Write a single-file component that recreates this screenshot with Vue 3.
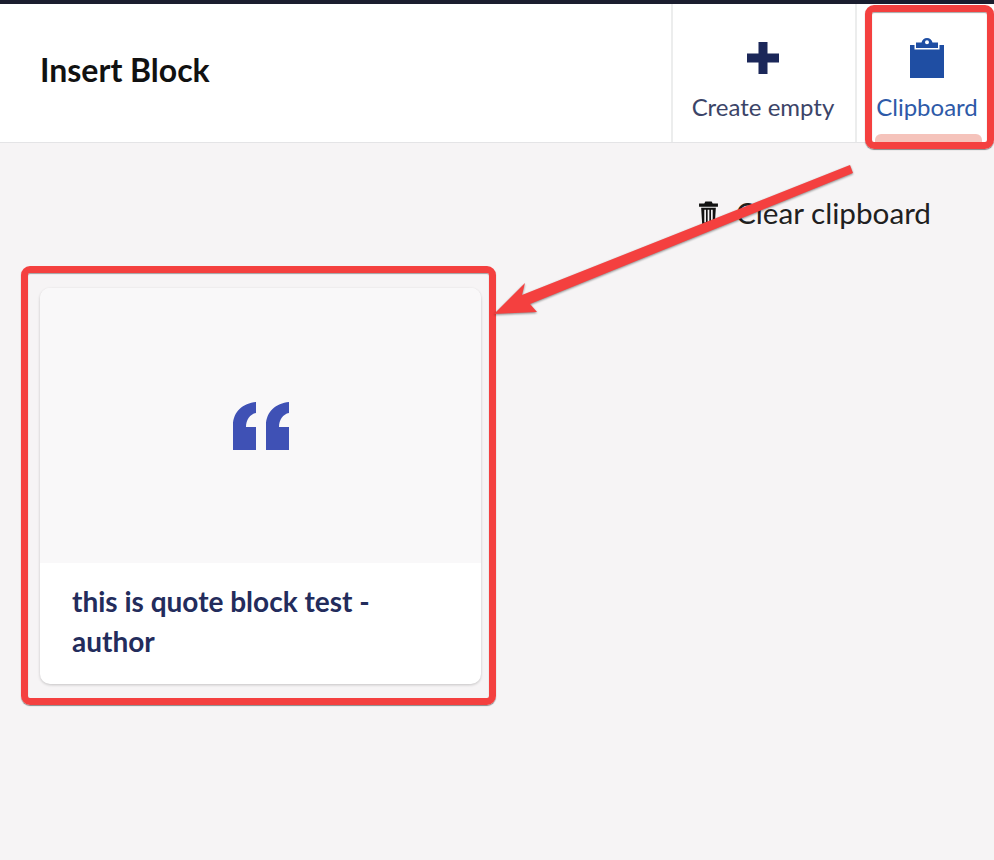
<template>
  <div class="page">
    <div class="topline"></div>
    <header class="head">
      <h1 class="title">Insert Block</h1>
      <nav class="tabs">
        <button class="tab">
          <span class="tab-icon">
            <svg viewBox="0 0 32 32" width="32" height="32">
              <path fill="#1b2759" d="M11.500 0h9v11.500H32v9H20.500V32h-9V20.500H0v-9h11.500z" />
            </svg>
          </span>
          <span>Create empty</span>
        </button>
        <button class="tab active">
          <span class="tab-icon">
            <svg viewBox="0 0 34 40" width="34" height="40">
              <path fill="#1f4ea3" fill-rule="evenodd" d="M11.500 4.500C12 2 14.300 0 17 0s5 2 5.500 4.500H28V10H6V4.500zM17 2.300a2 2 0 1 0 0 4a2 2 0 0 0 0-4zM0 7h4.500v4.500h25V7H34v33H0z" />
            </svg>
          </span>
          <span>Clipboard</span>
          <i class="tab-mark"></i>
        </button>
      </nav>
    </header>

    <main class="body">
      <div class="tools">
        <button class="clear">
          <svg viewBox="0 0 20 24" width="21" height="26">
            <path fill="#111" fill-rule="evenodd" d="M7 1h6l1 2h5v3H1V3h5zM3 7h14l-1 16H4zm3 2v12h1.600V9zm3.200 0v12h1.600V9zm3.200 0v12H14V9z" />
          </svg>
          <span>Clear clipboard</span>
        </button>
      </div>

      <article class="card">
        <div class="preview">
          <svg viewBox="0 0 56 48" width="56" height="48">
            <path fill="#3f51b5" d="M23 0v11C17 12 13 18 13 25h10v23H0V23C0 10 10 1 23 0zM56 0v11c-6 1-10 7-10 14h10v23H33V23C33 10 43 1 56 0z" />
          </svg>
        </div>
        <p class="label">this is quote block test - author</p>
      </article>
    </main>

    <!-- red annotations drawn over the screenshot -->
    <div class="mark mark-tab"></div>
    <div class="mark mark-card"></div>
    <svg class="arrow" viewBox="0 0 994 860" width="994" height="860">
      <path fill="#f4403f" d="M850 165l3 8L530 304l7 8l-43 2l31-31l-3 12z" />
    </svg>
  </div>
</template>

<script setup>
</script>

<style>
html,
body {
  margin: 0;
  background: #f6f4f5;
}
</style>

<style scoped>
.page {
  position: relative;
  width: 994px;
  height: 860px;
  overflow: hidden;
  background: #f6f4f5;
  font-family: Lato, "Open Sans", sans-serif;
}

.topline {
  height: 4px;
  background: #1b1d2e;
}

.head {
  display: flex;
  justify-content: space-between;
  align-items: stretch;
  height: 139px;
  background: #fff;
  border-bottom: 1px solid #e4e4e6;
  box-sizing: border-box;
}

.title {
  margin: 0 0 8px 40px;
  align-self: center;
  font-size: 32px;
  font-weight: 700;
  color: #111;
}

.tabs {
  display: flex;
}

.tab {
  position: relative;
  display: flex;
  flex-direction: column;
  align-items: center;
  justify-content: flex-start;
  gap: 14px;
  width: 184px;
  padding: 34px 2px 0 0;
  border: 0;
  border-left: 2px solid #eceded;
  background: #fff;
  color: #3b4468;
  font-family: inherit;
  font-size: 24px;
  box-sizing: border-box;
}

.tab-icon {
  display: flex;
  align-items: center;
  height: 40px;
}

.tab.active {
  width: 139px;
  padding: 34px 0 0 3px;
  color: #2e5aa8;
}

.tab-mark {
  position: absolute;
  left: 18px;
  right: 12px;
  bottom: 0;
  height: 8px;
  border-radius: 6px 6px 0 0;
  background: #f5c3bb;
}

.body {
  padding: 52px 40px 0;
}

.tools {
  display: flex;
  justify-content: flex-end;
  padding-right: 23px;
}

.clear {
  display: flex;
  align-items: center;
  gap: 17px;
  padding: 0;
  border: 0;
  background: none;
  color: #202020;
  font-family: inherit;
  font-size: 29.700px;
}

.card {
  width: 441px;
  margin-top: 58px;
  border-radius: 10px;
  overflow: hidden;
  background: #fff;
  box-shadow: 0 1px 3px rgba(0, 0, 0, 0.2);
}

.preview {
  display: flex;
  align-items: center;
  justify-content: center;
  height: 275px;
  background: #f9f8f9;
}

.label {
  margin: 0;
  padding: 18px 32px 23px;
  color: #232c5c;
  font-size: 28px;
  font-weight: 700;
  line-height: 40px;
}

.mark {
  position: absolute;
  border: 7px solid #f4403f;
  border-radius: 9px;
  box-sizing: border-box;
  box-shadow: 0 1px 1px rgba(0, 0, 0, 0.45), inset 0 1px 1px rgba(0, 0, 0, 0.35);
}

.mark-tab {
  left: 865px;
  top: 5px;
  width: 129px;
  height: 144px;
}

.mark-card {
  left: 21px;
  top: 266px;
  width: 475px;
  height: 439px;
}

.arrow {
  position: absolute;
  left: 0;
  top: 0;
  filter: drop-shadow(0 1px 1px rgba(0, 0, 0, 0.45));
}
</style>
